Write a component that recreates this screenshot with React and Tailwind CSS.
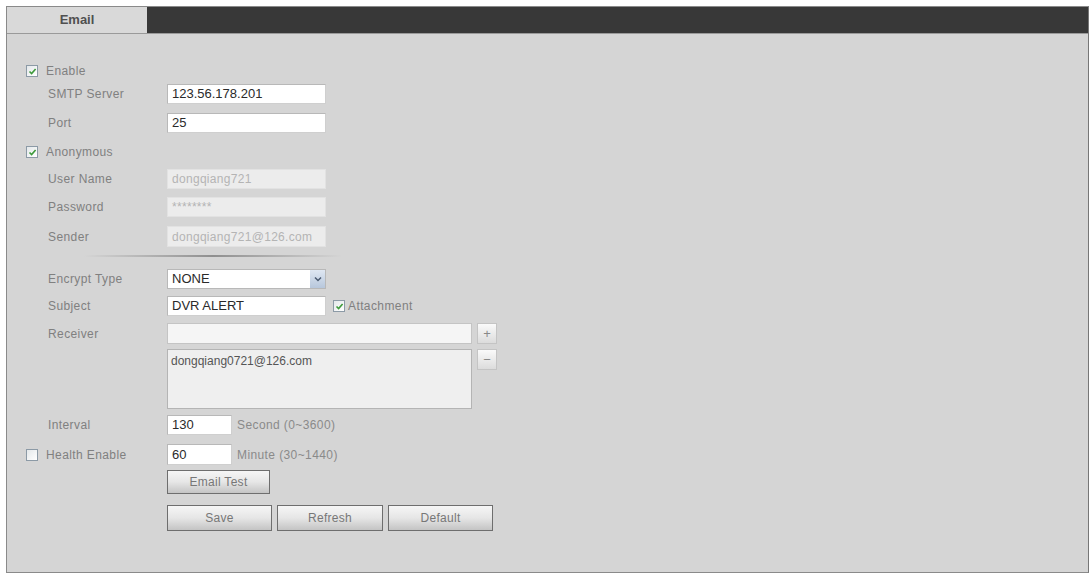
import React from 'react';

const font = { fontFamily: '"Liberation Sans", Arial, sans-serif' };

const Check = ({ checked }) => (
  <span className="inline-flex h-[12px] w-[12px] items-center justify-center border border-[#8c9aa6] bg-gradient-to-br from-[#e4e8ea] to-[#ffffff]">
    {checked && (
      <svg width="9" height="9" viewBox="0 0 9 9">
        <path d="M1.5 4.5 L3.6 6.6 L7.6 2" fill="none" stroke="#3d9a3a" strokeWidth="1.6" />
      </svg>
    )}
  </span>
);

const Label = ({ children }) => (
  <span className="w-[160px] shrink-0 pl-[41px] text-[12px] tracking-[0.4px] text-[#808080]">{children}</span>
);

const Field = ({ value, disabled, w = 'w-[159px]' }) => (
  <div
    className={`${w} flex h-full items-center border px-[4px] ${
      disabled
        ? 'border-[#e2e2e2] bg-[#ececec] text-[12px] tracking-[0.3px] text-[#b4b4b4]'
        : 'border-[#cfcfcf] border-t-[#b8b8b8] border-l-[#b8b8b8] bg-white text-[13px] text-[#2a2a2a]'
    }`}
  >
    {value}
  </div>
);

const Btn = ({ children, w = 'w-[105px]', h = 'h-[26px]' }) => (
  <button className={`${w} ${h} border border-[#6e6e6e] bg-gradient-to-b from-[#f6f6f6] via-[#e6e6e6] to-[#c4c4c4] text-[12px] tracking-[0.3px] text-[#777]`}>
    {children}
  </button>
);

const SmallBtn = ({ children }) => (
  <div className="flex h-[21px] w-[20px] items-center justify-center border border-[#c4c4c4] bg-gradient-to-b from-[#fafafa] to-[#dcdcdc] text-[13px] leading-none text-[#888]">
    {children}
  </div>
);

export default function App() {
  return (
    <div className="min-h-[573px] w-[1090px] bg-white pt-[6px] pl-[6px]" style={font}>
      <div className="flex h-[567px] w-[1083px] flex-col border border-[#8a8a8a] border-r-[#777] bg-[#d5d5d5]">
        {/* tab bar */}
        <div className="flex h-[27px] shrink-0 border-b border-[#9a9a9a]">
          <div className="flex w-[140px] items-center justify-center bg-[#d9d9d9] text-[13px] font-bold text-[#505050]">
            Email
          </div>
          <div className="flex-1 bg-[#383838]" />
        </div>

        <div className="flex flex-col">
          <div className="mt-[27px] flex h-[20px] items-center pl-[19px]">
            <Check checked />
            <span className="ml-[8px] text-[12px] tracking-[0.4px] text-[#808080]">Enable</span>
          </div>

          <div className="mt-[3px] flex h-[20px] items-center">
            <Label>SMTP Server</Label>
            <Field value="123.56.178.201" />
          </div>

          <div className="mt-[9px] flex h-[20px] items-center">
            <Label>Port</Label>
            <Field value="25" />
          </div>

          <div className="mt-[9px] flex h-[20px] items-center pl-[19px]">
            <Check checked />
            <span className="ml-[8px] text-[12px] tracking-[0.4px] text-[#808080]">Anonymous</span>
          </div>

          <div className="mt-[7px] flex h-[20px] items-center">
            <Label>User Name</Label>
            <Field value="dongqiang721" disabled />
          </div>

          <div className="mt-[8px] flex h-[20px] items-center">
            <Label>Password</Label>
            <Field value="********" disabled />
          </div>

          <div className="mt-[9px] flex h-[21px] items-center">
            <Label>Sender</Label>
            <Field value="dongqiang721@126.com" disabled />
          </div>

          <div className="mt-[8px] ml-[77px] h-[2px] w-[258px] bg-gradient-to-r from-transparent via-[#8f8f8f] to-transparent" />

          <div className="mt-[12px] flex h-[20px] items-center">
            <Label>Encrypt Type</Label>
            <div className="flex h-full w-[159px] items-center border border-[#b8b8b8] bg-white pl-[4px] text-[13px] text-[#2a2a2a]">
              <span className="flex-1">NONE</span>
              <span className="flex h-full w-[15px] items-center justify-center bg-gradient-to-b from-[#dfe7f2] to-[#b7c7dc]">
                <svg width="8" height="6" viewBox="0 0 8 6">
                  <path d="M1 1.5 L4 4.5 L7 1.5" fill="none" stroke="#4a5a70" strokeWidth="1.5" />
                </svg>
              </span>
            </div>
          </div>

          <div className="mt-[7px] flex h-[20px] items-center">
            <Label>Subject</Label>
            <Field value="DVR ALERT" />
            <span className="ml-[7px] flex items-center">
              <Check checked />
            </span>
            <span className="ml-[3px] text-[12px] tracking-[0.4px] text-[#808080]">Attachment</span>
          </div>

          <div className="mt-[7px] flex h-[21px] items-center">
            <Label>Receiver</Label>
            <div className="h-full w-[305px] border border-[#c4c4c4] bg-[#f5f5f5]" />
            <span className="ml-[5px]">
              <SmallBtn>+</SmallBtn>
            </span>
          </div>

          <div className="mt-[5px] flex h-[60px] items-start">
            <span className="w-[160px] shrink-0" />
            <div className="h-full w-[305px] border border-[#b4b4b4] bg-[#efefef] px-[3px] pt-[2px] text-[12px] text-[#555]">
              dongqiang0721@126.com
            </div>
            <span className="ml-[5px]">
              <SmallBtn>−</SmallBtn>
            </span>
          </div>

          <div className="mt-[6px] flex h-[20px] items-center">
            <Label>Interval</Label>
            <Field value="130" w="w-[65px]" />
            <span className="ml-[5px] text-[12px] tracking-[0.4px] text-[#8a8a8a]">Second (0~3600)</span>
          </div>

          <div className="mt-[9px] flex h-[21px] items-center">
            <span className="flex w-[160px] shrink-0 items-center pl-[19px]">
              <Check />
              <span className="ml-[8px] text-[12px] tracking-[0.4px] text-[#808080]">Health Enable</span>
            </span>
            <Field value="60" w="w-[65px]" />
            <span className="ml-[5px] text-[12px] tracking-[0.4px] text-[#8a8a8a]">Minute (30~1440)</span>
          </div>

          <div className="mt-[5px] flex h-[24px] items-center">
            <span className="w-[160px] shrink-0" />
            <Btn w="w-[103px]" h="h-[24px]">Email Test</Btn>
          </div>

          <div className="mt-[11px] flex h-[26px] items-center gap-[5px]">
            <span className="w-[155px] shrink-0" />
            <Btn>Save</Btn>
            <Btn w="w-[106px]">Refresh</Btn>
            <Btn>Default</Btn>
          </div>
        </div>
      </div>
    </div>
  );
}
